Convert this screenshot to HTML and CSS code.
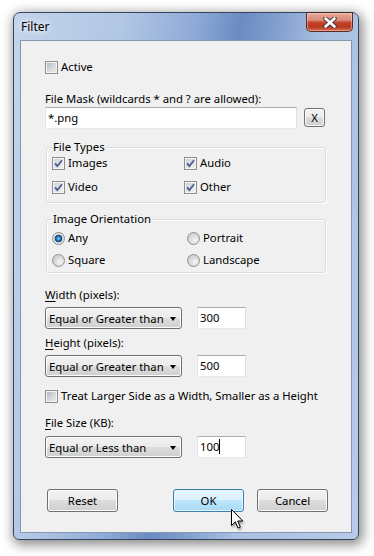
FILE: index.html
```html
<!DOCTYPE html>
<html lang="en">
<head>
    <meta charset="UTF-8">
    <title>Filter</title>
    <link rel="stylesheet" href="styles.css">
</head>
<body>

<div id="screen">
    <div class="window">
        <div class="titlebar">
            <span class="title">Filter</span>
            <span class="close">
                <svg width="14" height="11" viewBox="0 0 14 11">
                    <path d="M2.5 1.5 L11.5 9.5 M11.5 1.5 L2.5 9.5" stroke="#4b3a38" stroke-width="4.6" stroke-linecap="round"/>
                    <path d="M2.5 1.5 L11.5 9.5 M11.5 1.5 L2.5 9.5" stroke="#ffffff" stroke-width="2.6" stroke-linecap="round"/>
                </svg>
            </span>
        </div>

        <div class="client">
            <div class="check row-active"><span class="cb"></span>Active</div>

            <div class="lbl mask-lbl">File Mask (wildcards * and ? are allowed):</div>
            <div class="mask-row">
                <div class="edit mask">*.png</div>
                <div class="btn small">X</div>
            </div>

            <div class="group types">
                <div class="legend">File Types</div>
                <div class="grid">
                    <div class="check"><span class="cb on"><svg width="9" height="9" viewBox="0 0 9 9"><path d="M1 4.3 L3.4 7 L8 1.2" fill="none" stroke="#4a5d93" stroke-width="1.8"/></svg></span>Images</div>
                    <div class="check"><span class="cb on"><svg width="9" height="9" viewBox="0 0 9 9"><path d="M1 4.3 L3.4 7 L8 1.2" fill="none" stroke="#4a5d93" stroke-width="1.8"/></svg></span>Audio</div>
                    <div class="check"><span class="cb on"><svg width="9" height="9" viewBox="0 0 9 9"><path d="M1 4.3 L3.4 7 L8 1.2" fill="none" stroke="#4a5d93" stroke-width="1.8"/></svg></span>Video</div>
                    <div class="check"><span class="cb on"><svg width="9" height="9" viewBox="0 0 9 9"><path d="M1 4.3 L3.4 7 L8 1.2" fill="none" stroke="#4a5d93" stroke-width="1.8"/></svg></span>Other</div>
                </div>
            </div>

            <div class="group orient">
                <div class="legend">Image Orientation</div>
                <div class="grid">
                    <div class="check"><span class="rb on"></span>Any</div>
                    <div class="check"><span class="rb"></span>Portrait</div>
                    <div class="check"><span class="rb"></span>Square</div>
                    <div class="check"><span class="rb"></span>Landscape</div>
                </div>
            </div>

            <div class="lbl w-lbl"><u>W</u>idth (pixels):</div>
            <div class="cmp-row">
                <div class="combo">Equal or Greater than<span class="arrow"></span></div>
                <div class="edit num">300</div>
            </div>

            <div class="lbl h-lbl"><u>H</u>eight (pixels):</div>
            <div class="cmp-row">
                <div class="combo">Equal or Greater than<span class="arrow"></span></div>
                <div class="edit num">500</div>
            </div>

            <div class="check row-treat"><span class="cb"></span>Treat Larger Side as a Width, Smaller as a Height</div>

            <div class="lbl s-lbl"><u>F</u>ile Size (KB):</div>
            <div class="cmp-row size-row">
                <div class="combo">Equal or Less than<span class="arrow"></span></div>
                <div class="edit num">100<span class="caret"></span></div>
            </div>

            <div class="buttons">
                <div class="btn reset">Reset</div>
                <div class="btn hot ok">OK</div>
                <div class="btn cancel">Cancel</div>
            </div>
        </div>
    </div>

    <svg class="pointer" width="14" height="21" viewBox="0 0 14 21">
        <path d="M0.5 0.5 L0.5 16.5 L4.3 12.8 L7 19 L9.3 18 L6.7 12 L11.8 12 Z" fill="#fff" stroke="#000" stroke-width="1" stroke-linejoin="miter"/>
    </svg>
</div>

</body>
</html>
```

FILE: styles.css
```css
body {
    margin: 0;
    background: #fff;
    font-family: "Noto Sans", sans-serif;
    font-size: 11.3px;
    color: #000;
}

#screen {
    position: relative;
    width: 374px;
    height: 556px;
    overflow: hidden;
}

.window {
    margin: 12px 0 0 13px;
    width: 346px;
    height: 528px;
    box-sizing: border-box;
    border: 1px solid #34455d;
    border-radius: 7px 7px 6px 6px;
    background: linear-gradient(100deg, #c3d4eb 0%, #b2c7e5 25%, #8eaad6 42%, #6b8cc2 52%, #7f9dcd 60%, #a9c0e2 72%, #b8cbe7 100%);
    box-shadow: 2px 3px 12px 2px rgba(0, 0, 0, 0.45);
    display: flex;
    flex-direction: column;
}

.titlebar {
    height: 27px;
    display: flex;
    align-items: flex-start;
}

.title {
    padding: 6px 0 0 7px;
    line-height: 16px;
    font-size: 12px;
    text-shadow: 0 0 6px #fff, 0 0 10px #fff;
}

.close {
    margin: -1px 5px 0 auto;
    width: 47px;
    height: 20px;
    box-sizing: border-box;
    border: 1px solid #5b2a22;
    border-top-color: #3b2a28;
    border-radius: 0 0 5px 5px;
    background: linear-gradient(#e9ab9c 0%, #d88b79 40%, #c4452c 52%, #b9381f 75%, #d46a50 100%);
    box-shadow: inset 0 0 0 1px rgba(255, 220, 210, 0.45);
    display: flex;
    align-items: center;
    justify-content: center;
}

.client {
    margin: 0 6px 0 6px;
    height: 493px;
    box-sizing: border-box;
    border: 1px solid #8497b0;
    background: #f0f0f0;
    padding-left: 24px;
}

.lbl {
    line-height: 16px;
    height: 16px;
}

u {
    text-decoration-thickness: 1px;
    text-underline-offset: 2px;
}

.check {
    display: flex;
    align-items: center;
    gap: 3px;
    height: 16px;
    line-height: 16px;
    white-space: nowrap;
}

.cb {
    width: 13px;
    height: 13px;
    box-sizing: border-box;
    border: 1px solid #8e8f8f;
    background: linear-gradient(135deg, #aeb3b9 0%, #d4d6d9 50%, #eeeeee 100%);
    box-shadow: inset 0 0 0 1px #f4f4f4;
    display: flex;
    align-items: center;
    justify-content: center;
    flex: none;
}

.cb.on {
    background: linear-gradient(135deg, #c9ccd0 0%, #e2e3e5 50%, #f2f2f2 100%);
}

.rb {
    width: 13px;
    height: 13px;
    box-sizing: border-box;
    border-radius: 50%;
    border: 1px solid #8e8f8f;
    background: radial-gradient(circle at 65% 65%, #f6f6f6 0%, #dcdcdc 45%, #c3c3c3 100%);
    flex: none;
}

.rb.on {
    background: radial-gradient(circle at 50% 50%, #8fe0ff 0px, #2f86c8 1.6px, #14508f 3px, #1a4a80 3.5px, #e6e6e6 4.2px, #d0d0d0 100%);
}

.row-active {
    margin-top: 18px;
}

.mask-lbl {
    margin-top: 16px;
}

.mask-row {
    display: flex;
    align-items: flex-start;
    gap: 7px;
}

.edit {
    height: 22px;
    box-sizing: border-box;
    background: #fff;
    border: 1px solid;
    border-color: #abadb3 #dbdfe6 #e3e9ef #e2e3ea;
    padding-left: 2px;
    line-height: 20px;
}

.mask {
    width: 252px;
}

.btn {
    width: 71px;
    height: 23px;
    box-sizing: border-box;
    border: 1px solid #707070;
    border-radius: 3px;
    background: linear-gradient(#f2f2f2 0%, #ebebeb 50%, #dddddd 50%, #cfcfcf 100%);
    box-shadow: inset 0 0 0 1px #fcfcfc;
    display: flex;
    align-items: center;
    justify-content: center;
}

.btn.small {
    width: 21px;
    height: 19px;
    margin-top: 1px;
}

.btn.hot {
    border-color: #3c7fb1;
    background: linear-gradient(#eaf6fd 0%, #d9f0fc 50%, #bee6fd 50%, #a7d9f5 100%);
    box-shadow: inset 0 0 0 1px #e6f4fc;
}

.group {
    margin-left: 1px;
    width: 280px;
    box-sizing: border-box;
    border: 1px solid #d5dfe5;
    border-radius: 3px;
    box-shadow: inset 1px 1px 0 #fff, 1px 1px 0 #fff;
}

.legend {
    display: table;
    margin: -9px 0 0 5px;
    padding: 0 1px;
    background: #f0f0f0;
    line-height: 16px;
}

.types {
    margin-top: 18px;
    padding-bottom: 7px;
}

.types .grid {
    display: grid;
    grid-template-columns: 132px auto;
    row-gap: 8px;
    padding-left: 5px;
}

.orient {
    margin-top: 16px;
    padding-bottom: 4px;
}

.orient .grid {
    display: grid;
    grid-template-columns: 135px auto;
    row-gap: 6px;
    margin-top: 3px;
    padding-left: 5px;
}

.w-lbl {
    margin-top: 14px;
}

.cmp-row {
    margin-top: 4px;
    display: flex;
    gap: 15px;
}

.combo {
    width: 137px;
    height: 22px;
    box-sizing: border-box;
    border: 1px solid #707070;
    border-radius: 3px;
    background: linear-gradient(#f2f2f2 0%, #ebebeb 50%, #dddddd 50%, #cfcfcf 100%);
    box-shadow: inset 0 0 0 1px #fcfcfc;
    display: flex;
    align-items: center;
    padding-left: 3px;
    white-space: nowrap;
}

.arrow {
    margin: 1px 5px 0 auto;
    width: 0;
    height: 0;
    border-left: 3.5px solid transparent;
    border-right: 3.5px solid transparent;
    border-top: 4px solid #000;
}

.num {
    width: 49px;
}

.caret {
    display: inline-block;
    width: 1px;
    height: 15px;
    background: #000;
    vertical-align: -3px;
}

.h-lbl {
    margin-top: 6px;
}

.row-treat {
    margin-top: 11px;
}

.s-lbl {
    margin-top: 11px;
}

.size-row {
    margin-top: 5px;
}

.buttons {
    margin-top: 31px;
    display: flex;
}

.reset {
    margin-left: 2px;
}

.ok {
    margin-left: 55px;
}

.cancel {
    margin-left: 13px;
}

.pointer {
    position: absolute;
    left: 231px;
    top: 509px;
    filter: drop-shadow(1px 2px 1px rgba(0, 0, 0, 0.35));
}
```
